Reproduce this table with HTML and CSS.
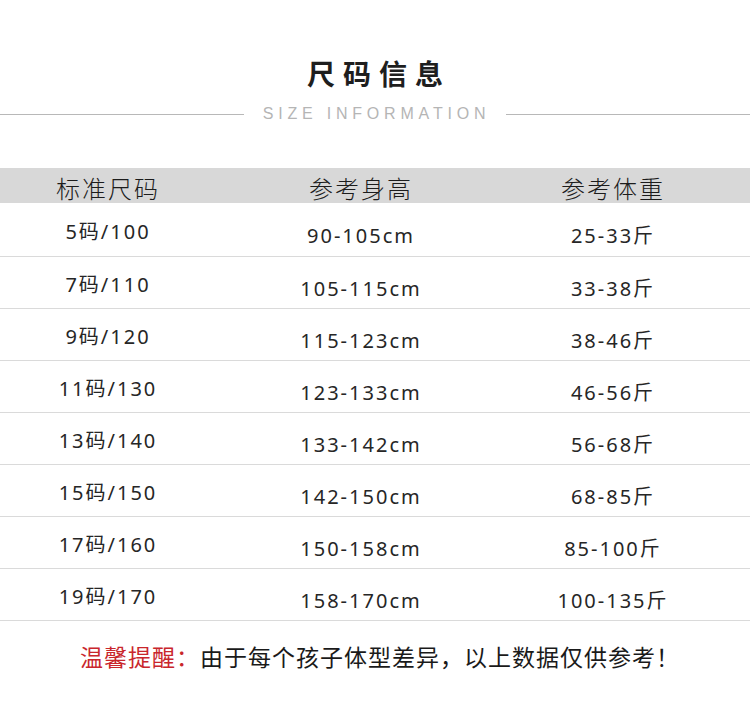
FILE: index.html
```html
<!DOCTYPE html>
<html lang="zh-CN">
<head>
<meta charset="utf-8">
<title>尺码信息</title>
<link rel="stylesheet" href="styles.css">
</head>
<body>
<div class="page">
  <h1 class="title">尺码信息</h1>
  <div class="subtitle">
    <span class="rule"></span>
    <span class="sub-text">SIZE INFORMATION</span>
    <span class="rule"></span>
  </div>

  <div class="table">
    <div class="row head">
      <div class="c1">标准尺码</div>
      <div class="c2">参考身高</div>
      <div class="c3">参考体重</div>
    </div>
    <div class="row first">
      <div class="c1">5码/100</div>
      <div class="c2">90-105cm</div>
      <div class="c3">25-33斤</div>
    </div>
    <div class="row">
      <div class="c1">7码/110</div>
      <div class="c2">105-115cm</div>
      <div class="c3">33-38斤</div>
    </div>
    <div class="row">
      <div class="c1">9码/120</div>
      <div class="c2">115-123cm</div>
      <div class="c3">38-46斤</div>
    </div>
    <div class="row">
      <div class="c1">11码/130</div>
      <div class="c2">123-133cm</div>
      <div class="c3">46-56斤</div>
    </div>
    <div class="row">
      <div class="c1">13码/140</div>
      <div class="c2">133-142cm</div>
      <div class="c3">56-68斤</div>
    </div>
    <div class="row">
      <div class="c1">15码/150</div>
      <div class="c2">142-150cm</div>
      <div class="c3">68-85斤</div>
    </div>
    <div class="row">
      <div class="c1">17码/160</div>
      <div class="c2">150-158cm</div>
      <div class="c3">85-100斤</div>
    </div>
    <div class="row">
      <div class="c1">19码/170</div>
      <div class="c2">158-170cm</div>
      <div class="c3">100-135斤</div>
    </div>
  </div>

  <p class="note"><span class="note-label">温馨提醒：</span>由于每个孩子体型差异，以上数据仅供参考！</p>
</div>
</body>
</html>
```

FILE: styles.css
```css
html, body {
  margin: 0;
  padding: 0;
  background: #ffffff;
}

.page {
  width: 750px;
  height: 716px;
  overflow: hidden;
  font-family: "Noto Sans", "Noto Sans CJK SC", sans-serif;
  color: #222222;
}

.title {
  margin: 53px 0 0 0;
  height: 40px;
  line-height: 40px;
  font-family: "Noto Sans CJK SC", sans-serif;
  font-size: 28px;
  font-weight: 700;
  letter-spacing: 8px;
  text-indent: 8px;
  text-align: center;
  color: #1e1e1e;
}

.subtitle {
  margin-top: 11px;
  height: 20px;
  display: flex;
  align-items: center;
  gap: 19px;
}

.rule {
  flex: 1;
  height: 1px;
  background: #b8b8b8;
}

.sub-text {
  font-family: "Liberation Sans", Arial, sans-serif;
  font-size: 16px;
  line-height: 20px;
  letter-spacing: 4.8px;
  margin-right: -3px;
  color: #b5b5b5;
  font-weight: 400;
}

.table {
  margin-top: 44px;
}

.row {
  display: grid;
  grid-template-columns: 216px 290px 214px 30px;
  height: 51px;
  border-bottom: 1px solid #dadada;
  font-size: 20px;
  font-weight: 400;
  letter-spacing: 2px;
  line-height: 45px;
  text-align: center;
  color: #262626;
}

.row .c1 {
  padding-top: 5px;
}

.row .c2,
.row .c3 {
  padding-top: 9px;
}

.row.first {
  height: 53px;
}

.row.first .c1 {
  padding-top: 6px;
}

.row.first .c2,
.row.first .c3 {
  padding-top: 10px;
}

.row.head {
  height: 35px;
  border-bottom: none;
  background: #d8d8d8;
  font-family: "Noto Sans CJK SC", sans-serif;
  font-size: 24px;
  font-weight: 300;
  letter-spacing: 2px;
  line-height: 35px;
  color: #1c1c1c;
}

.row.head .c1,
.row.head .c2,
.row.head .c3 {
  padding-top: 2px;
}

.note {
  margin: 20px 0 0 80px;
  height: 30px;
  line-height: 30px;
  font-family: "Noto Sans CJK SC", sans-serif;
  font-size: 23px;
  letter-spacing: 1px;
  color: #1a1a1a;
}

.note-label {
  color: #c9262c;
}
```
